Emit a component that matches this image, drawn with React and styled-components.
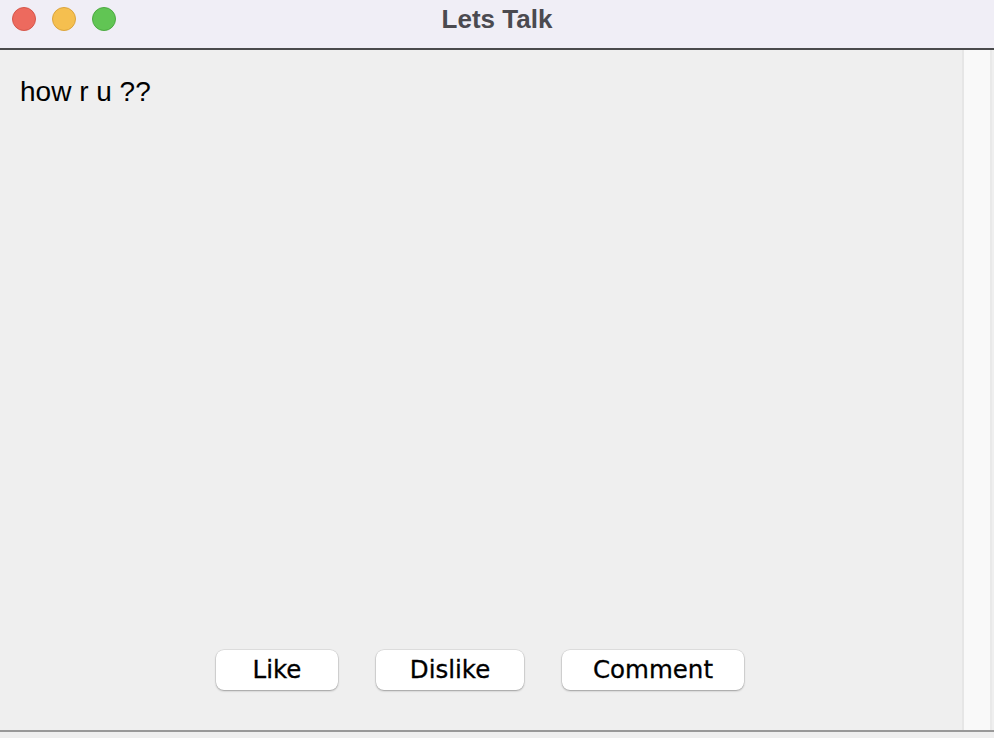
import React from "react";
import styled, { createGlobalStyle } from "styled-components";

const GlobalStyle = createGlobalStyle`
	html, body {
		margin: 0;
		padding: 0;
		overflow: hidden;
		background: #efefef;
	}
`;

const Window = styled.div`
	display: flex;
	flex-direction: column;
	width: 994px;
	height: 738px;
	background: #efefef;
`;

const TitleBar = styled.div`
	position: relative;
	display: flex;
	align-items: center;
	justify-content: center;
	height: 48px;
	background: #f0eef6;
	border-bottom: 2px solid #4a4a4c;
	flex-shrink: 0;
`;

const Lights = styled.div`
	position: absolute;
	left: 12px;
	top: 7px;
	display: flex;
	gap: 16px;
`;

const Light = styled.span`
	width: 24px;
	height: 24px;
	border-radius: 50%;
	box-sizing: border-box;
	background: ${({ color }) => color};
	border: 1px solid ${({ edge }) => edge};
`;

const Title = styled.div`
	font-family: "Liberation Sans", Arial, sans-serif;
	font-weight: bold;
	font-size: 26px;
	color: #4b4a50;
	margin-top: -10px;
`;

const Body = styled.div`
	display: flex;
	flex: 1;
	min-height: 0;
`;

const Panel = styled.div`
	display: flex;
	flex-direction: column;
	width: 962px;
	padding: 26px 0 40px 20px;
	box-sizing: border-box;
`;

const Message = styled.div`
	font-family: "Liberation Sans", Arial, sans-serif;
	font-size: 28px;
	color: #000;
`;

const ButtonRow = styled.div`
	display: flex;
	justify-content: center;
	gap: 38px;
	margin-top: auto;
	margin-left: -22px;
`;

const Button = styled.button`
	width: ${({ w }) => w}px;
	height: 40px;
	background: #fff;
	border: none;
	border-radius: 8px;
	box-shadow: 0 1px 2px rgba(0, 0, 0, 0.3), 0 0 0 0.5px rgba(0, 0, 0, 0.12);
	font-family: "DejaVu Sans", sans-serif;
	font-size: 24.5px;
	color: #000;
	-webkit-text-stroke: 0.3px #000;
	padding: 0 0 2px;
`;

const Track = styled.div`
	width: 26px;
	background: #f9f9f9;
	border-left: 2px solid #e6e6e6;
	border-right: 2px solid #e9e9e9;
`;

const BottomEdge = styled.div`
	height: 6px;
	border-top: 2px solid #999;
	background: #efefef;
	flex-shrink: 0;
`;

export default function App() {
	return (
		<>
			<GlobalStyle />
			<Window>
				<TitleBar>
					<Lights>
						<Light color="#ed6a5e" edge="#d5564a" />
						<Light color="#f5bf4f" edge="#dba43c" />
						<Light color="#61c554" edge="#4caa41" />
					</Lights>
					<Title>Lets Talk</Title>
				</TitleBar>
				<Body>
					<Panel>
						<Message>how r u ??</Message>
						<ButtonRow>
							<Button w={122}>Like</Button>
							<Button w={148}>Dislike</Button>
							<Button w={182}>Comment</Button>
						</ButtonRow>
					</Panel>
					<Track />
				</Body>
				<BottomEdge />
			</Window>
		</>
	);
}
